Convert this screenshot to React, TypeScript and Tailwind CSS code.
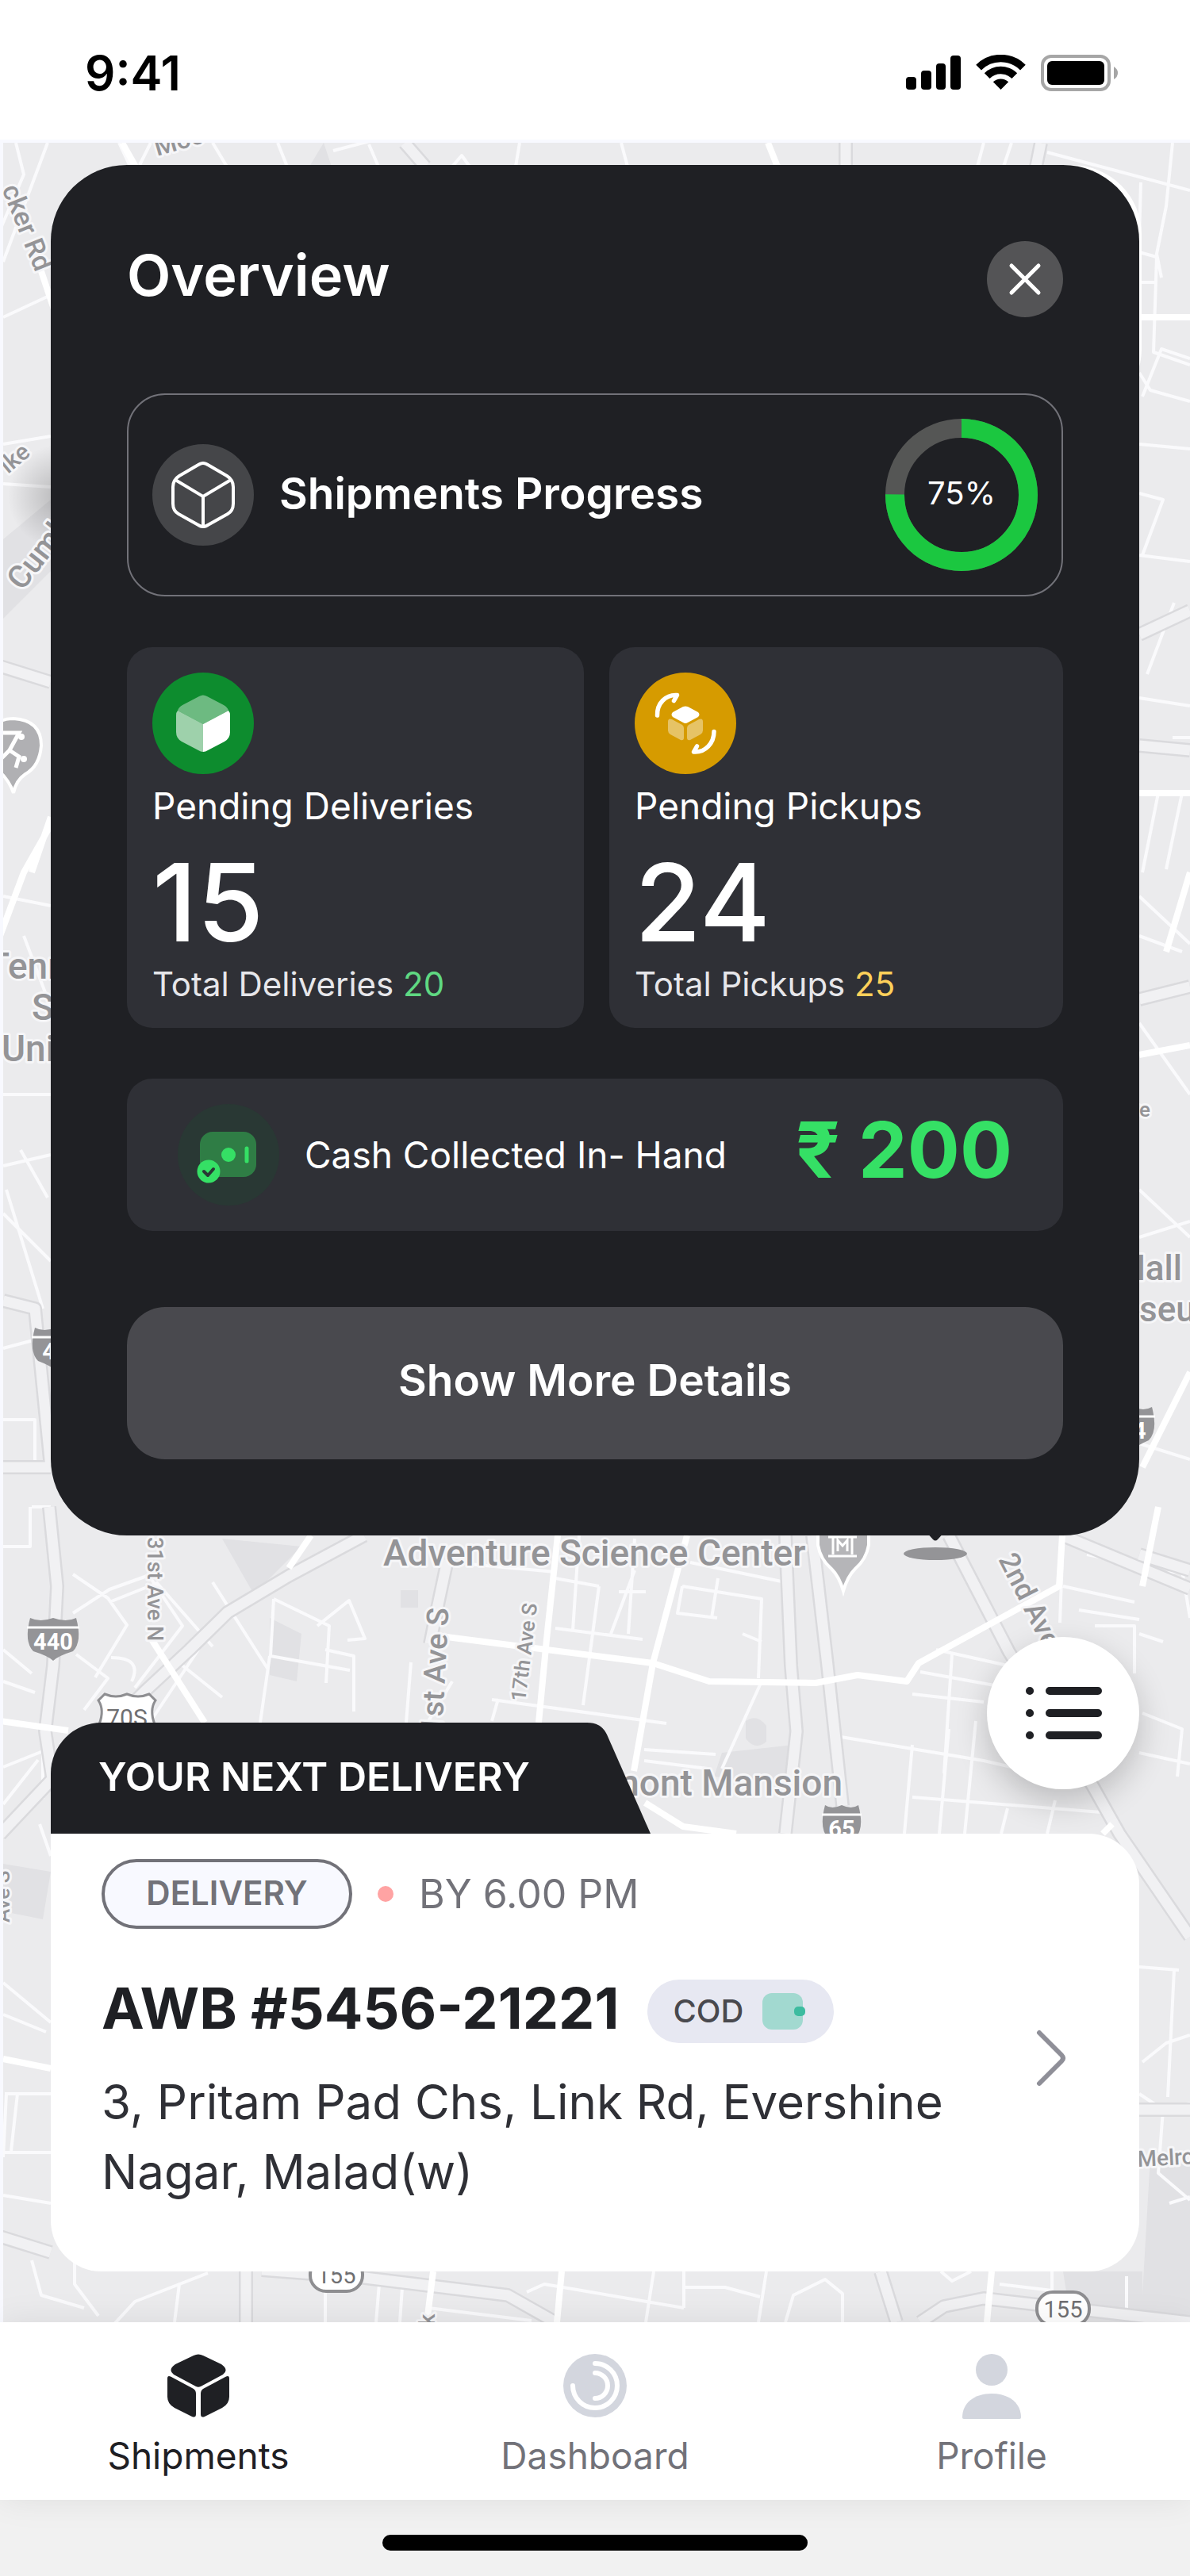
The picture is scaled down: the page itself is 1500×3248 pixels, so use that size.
import type { ReactNode } from "react";

const thinRoads = [
  "M20 180l10 40-30 70M60 180l-56 150M150 180l16 34M190 180l-14 28M268 180l18 30M350 180l12 30M420 190l46-12M465 182l12 28M655 180l-5 30M570 210l12-14 10 14M783 180l8 30M1240 180l-8 30M1275 180l-10 30",
  "M1320 192l180 48M1438 230l-4 140M1478 180l-8 80-12 60 6 30M1436 318l22 6M1458 324l-4 120 46 16M1436 356h22M1436 470l14 22 50 14M1440 500l24-60 36 12",
  "M4 400l60-28M4 560l60-10M4 610l60 4M1436 560l64 6M1436 622l30 8-26 70M1436 700l64 8M1480 760l-34 90M1436 880l64 10M1478 930h22M1460 1000l-20 100M1490 1000l-20 96M1436 1130l64 60M1436 1180l54 20M1436 1290l64 90M1436 1500l64 60M1436 1560l64-20M1436 1820l64 20",
  "M4 1130l60 12M30 1180l34 90M4 1380h60M4 1470l60-14M4 1530l60 60M26 1450l34 60M8 1500l46 150M4 1700l60-16M4 1790h40v60M40 1900h24M4 1950h34V1900",
  "M92 2034l46-30 50-18M92 1985l44 30 24 34-40 66M138 2020l60-24 70 80M190 1990l40 60-60 78M268 1995l70 110M345 2016l-4 72 100 18M345 2016l70 34-4 72M400 2050l40-32 20 48-22 2M410 2080l36 8v70M340 2088l-12 84M230 2100l50 40M250 2080l-60 90M96 2086l40 30-30 40M140 2090q40 0 26 30",
  "M590 1972l110 10M700 1990l55 10M730 1936l-8 120M755 2000l-20 150M800 1940l-8 120M800 1980l-30 80M700 2053l110 14M780 2007h34M860 2000l100 16-4 100M860 2000l-6 34 50 6M905 1990l-8 50M960 2070l-24-10M870 1970l115 24M620 2143l220 30M570 2120l-30 50M518 2096l-6 76M960 2120l-50 110M620 2170l8-28M812 2206l90 6M812 2220l80 10",
  "M1340 1936l-4 110M1360 2030l76 12M1370 1960l60 12M1340 2000l90 20M1380 2050h50v60M1180 2080l90 20M1160 2108l110 20M1150 2136l90 10M1200 2086l-10 150M1060 2190l180 30 130 30M1150 2200l-10 112M1196 2180l-12 132M1150 2266l250 20M1230 2170l-14 142M1270 2280l-8 32M1330 2270l-10 42M1440 2160l50 20-6 60M1436 2210l64 14M1436 2060l30 10M1440 1990l50-10 10 60",
  "M4 2120l40 14M4 2080l36 30M4 2228l50-20v60M4 2275l44-56M50 2300l14 40M4 2500l60 50M4 2540l54 22M6 2640h58M4 2714h60M22 2640l-8 72M4 2768l60 10M4 2720l4-80M1436 2480l50 4M1480 2484l-8 160M1440 2600l30-24 30-10M1436 2640l30 20 34-8M1500 2770l-26 8M1466 2660l-6 80 40 34",
  "M40 2850l12 44 54 16M94 2850v30l30 40M262 2866l-92 36-46 50M226 2880l-6 48M410 2890v38M478 2880l-4 48M508 2870l-4 58M540 2910l130 16M664 2890l22-10 176 30M824 2864l-10 64M862 2864v46M864 2884h50l44 12M966 2864l-10 64M990 2928l10-34 40-20 22 18v36M1186 2864l14 12 24-12M1260 2880l66 8v-24M1420 2870v50",
];

const streets = [
  "M555 2063L823 2097 894 2120 1028 2122 1081 2112 1143 2120 1158 2097 1335 2000 1339 1936",
  "M0 2170l86 12",
  "M703 1936l-14 131-10 105",
  "M866 1936l-43 161-24 136",
  "M392 1936l-28 41",
  "M191 2067l67 105",
  "M813 2273l48 30 67 9",
  "M48 330l20 60",
  "M154 180l18 32",
  "M968 180l12 30",
  "M0 1180l30-80 34-60M40 1100l24-70",
  "M1436 1330l64-12M1440 2000l20-100",
  "M546 2864l-8 64M708 2864l-6 64M1250 2864l-6 64",
  "M1390 2312l12-12",
  "M1436 400h64M1436 1000h64M1500 1100l-30 100M1440 1850l60-120",
  "M4 2596l60 12",
];

const highways = [
  "M62 1900l10 100-5 100-10 83 9 60-66 70",
  "M459 1936l-95 51-77 46-48 47-57 53-40 40",
  "M564 1967l-14 66-8 40",
  "M990 1936l7 164 7 83-14 129",
  "M1024 1936l19 164 19 177",
  "M1196 1936l76 147 106 170 33 59 89 130",
  "M1339 1936l161 67",
  "M510 180l26 30M1066 180v30M1312 180l-6 30",
  "M0 840l64 20M4 1640l40 10 20 200M4 1850h60",
  "M1436 800l64-30M1436 940l64 6M1436 1260l64-16M1436 1960l64 20",
  "M0 2820l64 20M310 2864v64M330 2862l130 10 180 22 60 34M1110 2864l20 64M1160 2928l30-20 50-10 260 30",
  "M1436 2660h64",
];

const patches = [
  "M408 180l-18 30h28z",
  "M4 680l60-50v90l-60 60z",
  "M280 1940l100 10-60 60z",
  "M940 2170q14-10 26 6v20q-14 12-26-4z",
  "M910 2210l90-10-10 50-90-10z",
  "M340 2040l40 20-6 60-34-8zM505 2005h22v22h-22zM1340 2864h100v64h-90z",
  "M4 2350l60 10-10 60-50-10zM1450 2720l50 10v198h-62z",
];

function MapLabel({ x, y, size, rotate = 0, anchor = "start", children }: {
  x: number; y: number; size: number; rotate?: number; anchor?: "start" | "end"; children: string;
}) {
  return (
    <text
      x={x} y={y} fontSize={size} textAnchor={anchor} transform={`rotate(${rotate} ${x} ${y})`}
      fontWeight="500" fill="#949497" stroke="#f6f6f8" strokeWidth="6" strokeLinejoin="round" paintOrder="stroke"
    >
      {children}
    </text>
  );
}

function Interstate({ x, y, w, label }: { x: number; y: number; w: number; label: string }) {
  return (
    <g transform={`translate(${x} ${y})`}>
      <path d={`M4 0Q${w / 4} 6 ${w / 2} 0Q${(w * 3) / 4} 6 ${w - 4} 0Q${w + 4} 30 ${w - 8} 42Q${w / 2 + 6} 48 ${w / 2} 54Q${w / 2 - 6} 48 8 42Q-4 30 4 0Z`} fill="#949497" />
      <path d={`M0 12H${w}`} stroke="#fff" strokeWidth="3" />
      <text x={w / 2} y="40" fontSize="29" fontWeight="700" textAnchor="middle" fill="#fff">{label}</text>
    </g>
  );
}

function StateRoute({ x, y }: { x: number; y: number }) {
  return (
    <g transform={`translate(${x} ${y})`}>
      <rect x="2" y="2" width="66" height="42" rx="20" fill="#fff" stroke="#8e8e91" strokeWidth="4" />
      <text x="35" y="34" fontSize="29" textAnchor="middle" fill="#6f6f72">155</text>
    </g>
  );
}

function MapBackdrop() {
  return (
    <svg
      aria-hidden="true" viewBox="0 180 1500 2748" preserveAspectRatio="xMidYMin slice"
      className="absolute inset-0 h-full w-full font-[Roboto,sans-serif]"
    >
      <defs>
        <radialGradient id="shade">
          <stop offset="0" stopColor="#000" stopOpacity=".22" />
          <stop offset="1" stopColor="#000" stopOpacity="0" />
        </radialGradient>
      </defs>
      <rect y="180" width="1500" height="2748" fill="#ebebed" />
      {patches.map((d) => <path key={d} d={d} fill="#e1e1e4" />)}
      <g fill="none" strokeLinejoin="round">
        {thinRoads.map((d) => <path key={d} d={d} stroke="#fafafc" strokeWidth="4" />)}
        {highways.map((d) => <path key={d} d={d} stroke="#dadadd" strokeWidth="18" />)}
        {highways.map((d) => <path key={d} d={d} stroke="#f1f1f3" strokeWidth="13" />)}
        {streets.map((d) => <path key={d} d={d} stroke="#fff" strokeWidth="8" />)}
      </g>

      <MapLabel x={198} y={197} size={32} rotate={-16}>Moo</MapLabel>
      <MapLabel x={2} y={238} size={34} rotate={68}>cker Rd</MapLabel>
      <MapLabel x={10} y={598} size={30} rotate={-40}>ike</MapLabel>
      <circle cx="76" cy="626" r="66" fill="url(#shade)" />
      <MapLabel x={28} y={746} size={40} rotate={-52}>Cumberland</MapLabel>
      <path d="M17 1000Q10 978-14 962V918Q0 906 17 906Q52 908 52 940Q50 966 32 976Q20 984 17 1000Z" fill="#b0b0b3" stroke="#fff" strokeWidth="4" />
      <path d="M4 924h20l-12 22 12 8-4 14M12 946l-10 10" stroke="#fff" strokeWidth="5" fill="none" />
      <circle cx="27" cy="929" r="4" fill="#fff" />
      <circle cx="30" cy="957" r="4" fill="#fff" />
      <MapLabel x={-16} y={1234} size={46}>Tennessee</MapLabel>
      <MapLabel x={40} y={1286} size={46}>State</MapLabel>
      <MapLabel x={2} y={1338} size={46}>University</MapLabel>
      <Interstate x={40} y={1674} w={60} label="40" />
      <MapLabel x={1450} y={1408} size={26} anchor="end">Ave</MapLabel>
      <MapLabel x={1490} y={1614} size={44} anchor="end">Hall</MapLabel>
      <MapLabel x={1436} y={1666} size={44}>seum</MapLabel>
      <Interstate x={1400} y={1774} w={56} label="24" />

      <MapLabel x={186} y={1938} size={27} rotate={90}>31st Ave N</MapLabel>
      <MapLabel x={483} y={1974} size={46}>Adventure Science Center</MapLabel>
      <MapLabel x={556} y={2208} size={38} rotate={-87}>21st Ave S</MapLabel>
      <MapLabel x={662} y={2146} size={26} rotate={-83}>17th Ave S</MapLabel>
      <MapLabel x={1258} y={1966} size={36} rotate={63}>2nd Ave S</MapLabel>
      <MapLabel x={1062} y={2264} size={46} anchor="end">Belmont Mansion</MapLabel>
      <MapLabel x={1434} y={2732} size={28} rotate={-3}>Melrose</MapLabel>
      <MapLabel x={12} y={2424} size={26} rotate={-90}>Ave S</MapLabel>
      <MapLabel x={548} y={2950} size={28} rotate={-90}>Pk</MapLabel>

      <path d="M1031 1920V1948Q1034 1966 1048 1978Q1058 1988 1063 2006Q1068 1988 1078 1978Q1092 1966 1095 1948V1920Z" fill="#b5b5b8" stroke="#fff" strokeWidth="4" />
      <path d="M1044 1938h36M1044 1962h36M1050 1938v22M1074 1938v22M1056 1956v-14l6 7 6-7v14" stroke="#fff" strokeWidth="3" fill="none" />
      <path d="M1166 1930H1192L1182 1941Q1179 1944 1176 1941Z" fill="#1f2024" />
      <ellipse cx="1179" cy="1959" rx="40" ry="8" fill="#949497" />

      <Interstate x={34} y={2040} w={66} label="440" />
      <Interstate x={1036} y={2276} w={50} label="65" />
      <path d="M132 2136Q146 2142 160 2136Q174 2142 188 2136L196 2144Q188 2156 195 2174V2190H125V2174Q132 2156 124 2144Z" fill="#fff" stroke="#8e8e91" strokeWidth="3" />
      <text x="160" y="2176" fontSize="30" textAnchor="middle" fill="#6f6f72">70S</text>
      <StateRoute x={389} y={2845} />
      <StateRoute x={1305} y={2888} />
      <rect y="180" width="4" height="2748" fill="#f8f9ff" />
      <rect x="1240" y="208" width="199" height="320" rx="88" fill="#fff" />
    </svg>
  );
}

function StatusIcons() {
  return (
    <svg aria-hidden="true" width="268" height="46" viewBox="1142 69 268 46">
      <rect x="1142" y="97" width="13" height="16" rx="4" />
      <rect x="1161" y="89" width="13" height="24" rx="4" />
      <rect x="1180" y="80" width="12" height="33" rx="4" />
      <rect x="1198" y="70" width="13" height="43" rx="4" />
      <g fill="none" stroke="#000" strokeWidth="9.5">
        <path d="M1233.6 85.1A39.5 39.5 0 0 1 1289.4 85.1" />
        <path d="M1244.2 95.7A24.5 24.5 0 0 1 1278.8 95.7" />
      </g>
      <path d="M1261.5 113L1251.8 103.3A14 14 0 0 1 1271.2 103.3Z" />
      <rect x="1314" y="71" width="84" height="42" rx="11" fill="none" stroke="#a6a6a6" strokeWidth="4" />
      <rect x="1320" y="77" width="72" height="30" rx="6" />
      <path d="M1404 84Q1409 87 1409 92Q1409 97 1404 100Z" fill="#a6a6a6" />
    </svg>
  );
}

function BoxOutlineIcon() {
  return (
    <svg aria-hidden="true" width="80" height="84" viewBox="0 0 80 84" fill="none" stroke="#fff" strokeWidth="4">
      <path d="M34 4Q40 0 46 4L70 18Q78 23 78 32V53Q78 62 71 66L46 80Q40 84 34 80L9 66Q2 62 2 53V32Q2 23 10 18Z" />
      <path d="M5 23L40 44L75 23M40 44V82" />
    </svg>
  );
}

function BoxSolidIcon() {
  return (
    <svg aria-hidden="true" width="68" height="72" viewBox="0 0 68 72" fill="#fff">
      <path d="M29 2Q34-1 39 2L60 13Q65 16 66 20L34 37L2 20Q3 16 8 13Z" opacity=".4" />
      <path d="M2 20L34 37V72Q31 72 28 70L7 59Q0 55 0 47V26Q0 22 2 20Z" opacity=".6" />
      <path d="M66 20L34 37V72Q37 72 40 70L61 59Q68 55 68 47V26Q68 22 66 20Z" />
    </svg>
  );
}

function PickupIcon() {
  return (
    <svg aria-hidden="true" width="128" height="128" viewBox="0 0 128 128" fill="#fff">
      <g fill="none" stroke="#fff" strokeWidth="5.5" strokeLinecap="round" strokeLinejoin="round">
        <path d="M28.5 54C28 39 39 27.5 53.5 28.5L49.5 35.5" />
        <path d="M100 74.5C100 89 89 101 74.5 100L78.5 93" />
      </g>
      <path d="M61 43Q64 42 67 43L80 50Q83 53 80 56L67 63Q64 65 61 63L48 56Q45 53 48 50Z" />
      <path d="M42 62Q42 57 47 59L60 66Q62 67.5 62 70V82Q62 86 58 85L45 78Q42 76 42 73Z" opacity=".4" />
      <path d="M86 62Q86 57 81 59L68 66Q66 67.5 66 70V82Q66 86 70 85L83 78Q86 76 86 73Z" opacity=".4" />
    </svg>
  );
}

function CashIcon() {
  return (
    <svg aria-hidden="true" width="128" height="128" viewBox="0 0 128 128">
      <rect x="28" y="35" width="71" height="57" rx="16" fill="#2f7d45" />
      <circle cx="64" cy="64" r="9" fill="#35e065" />
      <path d="M87 56V72" stroke="#35e065" strokeWidth="5" strokeLinecap="round" />
      <circle cx="39" cy="85" r="14.5" fill="#35e065" />
      <path d="M33 85L38 90L45 82" fill="none" stroke="#293834" strokeWidth="4" strokeLinecap="round" strokeLinejoin="round" />
    </svg>
  );
}

function ShipmentsIcon() {
  return (
    <svg aria-hidden="true" width="78" height="80" viewBox="0 0 78 80" fill="#1f2024">
      <path d="M33 2Q39-1 45 2L68 13Q78 20 70 26L42 41Q39 42.5 36 41L8 26Q0 20 10 13Z" />
      <path d="M0 31Q0 26 5 29L33 44Q36 46 36 50V76Q36 81 31 79L9 68Q0 63 0 54Z" />
      <path d="M78 31Q78 26 73 29L45 44Q42 46 42 50V76Q42 81 47 79L69 68Q78 63 78 54Z" />
    </svg>
  );
}

function DashboardIcon() {
  return (
    <svg aria-hidden="true" width="80" height="80" viewBox="0 0 80 80">
      <circle cx="40" cy="40" r="40" fill="#d3d6de" />
      <g fill="none" stroke="#fff" strokeWidth="6" strokeLinecap="round">
        <path d="M40 12A28 28 0 1 1 12 40" />
        <path d="M40 24A16 16 0 0 1 40 56" />
      </g>
    </svg>
  );
}

function ProfileIcon() {
  return (
    <svg aria-hidden="true" width="74" height="82" viewBox="0 0 74 82" fill="#d3d6de">
      <circle cx="37" cy="20" r="20" />
      <path d="M0 80C0 62 15 50 37 50S74 62 74 80Q74 82 72 82H2Q0 82 0 80Z" />
    </svg>
  );
}

function ProgressRing({ percent }: { percent: number }) {
  const length = 2 * Math.PI * 84;
  return (
    <div className="relative size-48">
      <svg aria-hidden="true" viewBox="0 0 192 192" fill="none" strokeWidth="24" className="size-full -rotate-90">
        <circle cx="96" cy="96" r="84" stroke="#555655" />
        <circle cx="96" cy="96" r="84" stroke="#1bc740" strokeDasharray={`${(length * percent) / 100} ${length}`} />
      </svg>
      <span className="absolute inset-0 flex items-center justify-center pb-1 text-[40px] text-white">{percent}%</span>
    </div>
  );
}

type StatProps = { icon: ReactNode; label: string; value: number; totalLabel: string; total: ReactNode };

function StatCard({ icon, label, value, totalLabel, total }: StatProps) {
  return (
    <div className="rounded-4xl bg-[#2f3036] p-8">
      {icon}
      <h3 className="mt-2 text-[46px] leading-[64px] text-white">{label}</h3>
      <p className="mt-[26px] text-[136px] leading-[128px] font-medium text-white">{value}</p>
      <p className="mt-4 text-[42px] leading-[46px] text-[#e6e6ea]">{totalLabel} {total}</p>
    </div>
  );
}

function Overview() {
  return (
    <section className="rounded-[96px] bg-[#1f2024] p-24">
      <div className="flex items-start justify-between">
        <h2 className="text-[72px] leading-[86px] font-semibold text-white">Overview</h2>
        <button aria-label="Close" className="flex size-24 items-center justify-center rounded-full bg-[#545456]">
          <svg aria-hidden="true" width="44" height="44" viewBox="0 0 44 44" stroke="#fff" strokeWidth="5" strokeLinecap="round">
            <path d="M5 5L39 39M39 5L5 39" />
          </svg>
        </button>
      </div>

      <div className="mt-24 flex items-center rounded-[48px] border-2 border-[#727279] p-[30px]">
        <span className="flex size-32 items-center justify-center rounded-full bg-[#454649]"><BoxOutlineIcon /></span>
        <h3 className="ml-8 flex-1 pb-1 text-[55px] leading-[64px] font-semibold text-white">Shipments Progress</h3>
        <ProgressRing percent={75} />
      </div>

      <div className="mt-16 grid grid-cols-[144fr_143fr] gap-8">
        <StatCard
          icon={<span className="flex size-32 items-center justify-center rounded-full bg-[#0d8c2e]"><BoxSolidIcon /></span>}
          label="Pending Deliveries" value={15} totalLabel="Total Deliveries"
          total={<span className="text-[#5fd882]">20</span>}
        />
        <StatCard
          icon={<span className="flex size-32 rounded-full bg-[#d69b00]"><PickupIcon /></span>}
          label="Pending Pickups" value={24} totalLabel="Total Pickups"
          total={<span className="text-[#ffd05a]">25</span>}
        />
      </div>

      <div className="mt-16 flex items-center rounded-4xl bg-[#2f3036] px-16 py-8">
        <span className="flex size-32 rounded-full bg-[#293834]"><CashIcon /></span>
        <h3 className="ml-8 flex-1 text-[46px] leading-[64px] text-white">Cash Collected In- Hand</h3>
        <p className="pb-3 text-[98px] leading-[96px] font-bold text-[#35e065]">₹ 200</p>
      </div>

      <button className="mt-24 h-48 w-full rounded-[48px] bg-[#49494e] pb-2 text-[55px] font-semibold text-white">
        Show More Details
      </button>
    </section>
  );
}

function NextDelivery() {
  return (
    <article className="flex items-center rounded-[64px] rounded-tl-none bg-white pt-8 pr-[92px] pb-[82px] pl-16">
      <div className="flex-1">
        <div className="flex items-center">
          <span className="flex h-[88px] w-[316px] items-center justify-center rounded-full border-4 border-[#727279] bg-[#f8f9ff] pb-1 text-[42px] font-semibold text-[#727279]">
            DELIVERY
          </span>
          <span className="ml-8 size-5 rounded-full bg-[#ffa3a3]" />
          <span className="ml-8 text-[50px] leading-[64px] text-[#727279]">BY 6.00 PM</span>
        </div>
        <div className="mt-16 flex items-center gap-9">
          <h2 className="pb-2 text-[72px] leading-[72px] font-bold text-[#1f2024]">AWB #5456-21221</h2>
          <span className="flex h-20 items-center gap-6 rounded-full bg-[#e7e8f2] pr-9 pl-8 text-[40px] font-medium text-[#49494e]">
            COD
            <svg aria-hidden="true" width="54" height="46" viewBox="0 0 54 46">
              <rect width="51" height="46" rx="12" fill="#a2d9d0" />
              <rect x="40" y="17" width="14" height="12" rx="5" fill="#3dbca0" />
            </svg>
          </span>
        </div>
        <p className="mt-[30px] max-w-[1120px] text-[60px] leading-[88px] text-[#2f3036]">
          3, Pritam Pad Chs, Link Rd, Evershine Nagar, Malad(w)
        </p>
      </div>
      <a href="#delivery" aria-label="Open delivery" className="mt-16">
        <svg aria-hidden="true" width="38" height="72" viewBox="0 0 38 72" fill="none" stroke="#8f8f98" strokeWidth="6" strokeLinecap="round">
          <path d="M4 4L32 32Q36 36 32 40L4 68" />
        </svg>
      </a>
    </article>
  );
}

function NavItem({ href, icon, active = false, children }: { href: string; icon: ReactNode; active?: boolean; children: string }) {
  return (
    <a href={href} className="flex flex-col items-center pt-10 pb-7">
      <span className="flex h-20 items-start">{icon}</span>
      <span className={active ? "mt-5 text-[46px] leading-[56px] text-[#1f2024]" : "mt-5 text-[46px] leading-[56px] text-[#727279]"}>
        {children}
      </span>
    </a>
  );
}

export default function App() {
  return (
    <div className="flex min-h-screen flex-col bg-[#f1f1f1] font-[Inter,sans-serif]">
      <header className="flex h-44 items-center justify-between bg-white pt-2 pr-[90px] pl-[107px]">
        <time className="text-[60px] leading-[64px] font-semibold text-black">9:41</time>
        <StatusIcons />
      </header>

      <main className="relative border-t-4 border-[#f8f9ff] px-16 pt-7 pb-16">
        <MapBackdrop />
        <div className="relative">
          <Overview />
          <div className="mt-32 flex items-end justify-between">
            <div className="mt-[108px] flex">
              <h2 className="flex h-[140px] w-[645px] items-center rounded-tl-[64px] bg-[#1f2024] pb-1 pl-[60px] text-[50px] leading-[64px] font-semibold whitespace-nowrap text-white">
                YOUR NEXT DELIVERY
              </h2>
              <svg aria-hidden="true" width="112" height="140" viewBox="0 0 112 140" fill="#1f2024" className="-ml-px">
                <path d="M0 0H32Q50 0 57 15L112 140H0Z" />
              </svg>
            </div>
            <button aria-label="Show list" className="flex size-48 items-center justify-center self-start rounded-full bg-white shadow-[0_16px_40px_rgba(0,0,0,0.2)]">
              <svg aria-hidden="true" width="98" height="70" viewBox="0 0 98 70" fill="none" stroke="#1f2024" strokeWidth="10" strokeLinecap="round">
                <path d="M7 7h.1M7 35h.1M7 63h.1M32 7H93M32 35H93M32 63H93" />
              </svg>
            </button>
          </div>
          <NextDelivery />
        </div>
      </main>

      <nav className="relative grid grid-cols-3 bg-white shadow-[0_0_40px_rgba(0,0,0,0.08)]">
        <NavItem href="#shipments" icon={<ShipmentsIcon />} active>Shipments</NavItem>
        <NavItem href="#dashboard" icon={<DashboardIcon />}>Dashboard</NavItem>
        <NavItem href="#profile" icon={<ProfileIcon />}>Profile</NavItem>
      </nav>
      <footer className="flex justify-center pt-11 pb-8">
        <div className="h-5 w-[536px] rounded-full bg-black" />
      </footer>
    </div>
  );
}
